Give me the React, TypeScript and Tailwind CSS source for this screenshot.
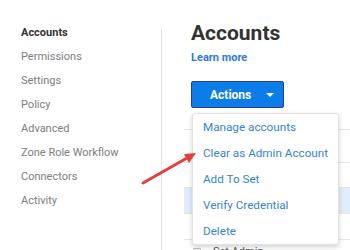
const navItems = [
  "Accounts",
  "Permissions",
  "Settings",
  "Policy",
  "Advanced",
  "Zone Role Workflow",
  "Connectors",
  "Activity",
];

const menuItems = [
  "Manage accounts",
  "Clear as Admin Account",
  "Add To Set",
  "Verify Credential",
  "Delete",
];

export default function App() {
  return (
    <div className="relative w-[350px] h-[250px] overflow-hidden bg-white font-['Roboto',sans-serif]">
      <div className="flex h-full">
        {/* Side nav */}
        <nav className="w-[161px] shrink-0 pt-[21px] pl-[21px]">
          {navItems.map((label, idx) => (
            <div
              key={label}
              className={
                idx === 0
                  ? "h-[24px] leading-[24px] text-[11px] font-bold text-[#333]"
                  : "h-[24px] leading-[24px] text-[11px] text-[#7d7d7d]"
              }
            >
              {label}
            </div>
          ))}
        </nav>

        <div className="w-px shrink-0 mt-[29px] bg-[#e3e3e3]" />

        {/* Main */}
        <main className="flex-1 pl-[22px]">
          <div className="pl-[7px]">
            <h1 className="pt-[20px] text-[21px] leading-[26px] font-bold text-[#333]">Accounts</h1>
            <a className="block mt-[5px] text-[11px] leading-[14px] font-bold text-[#2f7ae0]">Learn more</a>
            <button
              type="button"
              className="mt-[16px] flex items-center w-[93px] h-[27px] rounded-[2px] border border-[#2b3c8f] bg-[#0b7ce8] pl-[18px] text-[12px] font-bold text-white"
            >
              Actions
              <span className="ml-[15px] w-0 h-0 border-l-[4px] border-r-[4px] border-t-[4px] border-l-transparent border-r-transparent border-t-white" />
            </button>
          </div>

          {/* Table behind the menu */}
          <div className="mt-[9px]">
            <div className="h-[13px] border-b border-[#e6e6e6]" />
            <div className="h-[33px] border-b border-[#e6e6e6]" />
            <div className="h-[25px] border-b border-[#e6e6e6]" />
            <div className="h-[26px] bg-[#e2edfb] border-b border-[#e6e6e6]" />
            <div className="h-[26px] border-b border-[#e6e6e6]" />
            <div className="flex items-center h-[24px] pl-[9px] gap-[12px]">
              <span className="w-[8px] h-[8px] border border-[#bbb] rounded-[1px]" />
              <span className="text-[11px] text-[#555]">Set Admin</span>
            </div>
          </div>
        </main>
      </div>

      {/* Dropdown menu */}
      <div className="absolute left-[192px] top-[113px] w-[147px] rounded-[3px] border border-[#e2e2e2] bg-white shadow-[0_2px_5px_rgba(0,0,0,0.18)]">
        {menuItems.map((label) => (
          <div key={label} className="h-[26px] leading-[26px] pl-[10px] text-[11.7px] text-[#3583d6]">
            {label}
          </div>
        ))}
      </div>

      {/* Red annotation arrow */}
      <svg className="absolute left-0 top-0" width="350" height="250" viewBox="0 0 350 250">
        <line x1="143" y1="183" x2="187" y2="158" stroke="#e2403a" strokeWidth="3" strokeLinecap="round" />
        <polygon points="196,153 184,154 189,163" fill="#e2403a" />
      </svg>
    </div>
  );
}
